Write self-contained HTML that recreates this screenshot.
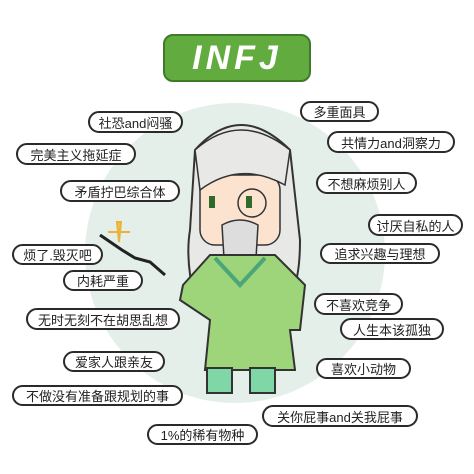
<!DOCTYPE html>
<html><head><meta charset="utf-8"><style>
body{margin:0;width:474px;height:474px;background:#fff;position:relative;overflow:hidden;font-family:"Liberation Sans","Noto Sans CJK SC",sans-serif}
.p{position:absolute;border:2px solid #2a2a2a;border-radius:12px;background:#fff;box-sizing:border-box;font-size:13px;color:#222;display:flex;align-items:center;justify-content:center;white-space:nowrap;letter-spacing:0}
.t{position:absolute;left:163px;top:34px;width:148px;height:48px;background:#62ab3e;border:2px solid #3e7a2a;border-radius:10px;box-sizing:border-box;color:#fff;font:italic bold 34px "Liberation Sans",sans-serif;display:flex;align-items:center;justify-content:center;letter-spacing:4px}
</style></head><body>
<div style="position:absolute;left:85px;top:103px;width:300px;height:300px;border-radius:50%;background:#e3efe8"></div>
<div class="t">INFJ</div>
<svg style="position:absolute;left:0;top:0" width="474" height="474">
<path d="M100 235 L122 250 L135 258 L150 262 L165 275" stroke="#222" stroke-width="3" fill="none"/>
<path d="M117 222 L119 242 L121 222 Z M108 232 L130 232" stroke="#e9b23c" stroke-width="2" fill="#f4c542"/>
<path d="M195 150 Q240 100 290 150 L300 240 Q300 290 285 300 L195 300 Q185 260 190 230 Z" fill="#e8e8e6" stroke="#333" stroke-width="2"/>
<rect x="200" y="175" width="80" height="70" rx="15" fill="#fbe3d0" stroke="#333" stroke-width="1.5"/>
<path d="M195 150 Q240 110 290 150 L285 185 Q240 160 200 190 Z" fill="#e8e8e6" stroke="#333" stroke-width="1.5"/>
<circle cx="252" cy="203" r="14" fill="none" stroke="#333" stroke-width="1.5"/>
<rect x="209" y="196" width="6" height="12" fill="#2f6a2b"/><rect x="246" y="196" width="6" height="12" fill="#2f6a2b"/>
<path d="M222 225 Q240 215 258 225 L255 275 L225 275 Z" fill="#ddd" stroke="#333" stroke-width="1.5"/>
<path d="M183 285 L210 255 L275 255 L305 285 L300 330 L290 330 L295 370 L205 370 L210 320 L180 300 Z" fill="#9ed47a" stroke="#333" stroke-width="2"/>
<path d="M215 258 L240 285 L265 258" fill="none" stroke="#4aa57a" stroke-width="4"/>
<rect x="207" y="368" width="25" height="25" fill="#7fd6a6" stroke="#333" stroke-width="2"/>
<rect x="250" y="368" width="25" height="25" fill="#7fd6a6" stroke="#333" stroke-width="2"/>
</svg>
<div class="p" style="left:88px;top:111px;width:95px;height:22px">社恐and闷骚</div>
<div class="p" style="left:16px;top:143px;width:120px;height:22px">完美主义拖延症</div>
<div class="p" style="left:60px;top:180px;width:120px;height:22px">矛盾拧巴综合体</div>
<div class="p" style="left:300px;top:101px;width:79px;height:21px">多重面具</div>
<div class="p" style="left:327px;top:131px;width:128px;height:22px">共情力and洞察力</div>
<div class="p" style="left:316px;top:172px;width:101px;height:22px">不想麻烦别人</div>
<div class="p" style="left:368px;top:214px;width:95px;height:22px">讨厌自私的人</div>
<div class="p" style="left:12px;top:244px;width:91px;height:21px">烦了.毁灭吧</div>
<div class="p" style="left:63px;top:270px;width:80px;height:21px">内耗严重</div>
<div class="p" style="left:26px;top:308px;width:154px;height:22px">无时无刻不在胡思乱想</div>
<div class="p" style="left:63px;top:351px;width:102px;height:21px">爱家人跟亲友</div>
<div class="p" style="left:12px;top:385px;width:171px;height:21px">不做没有准备跟规划的事</div>
<div class="p" style="left:147px;top:424px;width:111px;height:21px">1%的稀有物种</div>
<div class="p" style="left:320px;top:243px;width:120px;height:21px">追求兴趣与理想</div>
<div class="p" style="left:314px;top:293px;width:89px;height:22px">不喜欢竞争</div>
<div class="p" style="left:340px;top:318px;width:104px;height:22px">人生本该孤独</div>
<div class="p" style="left:316px;top:358px;width:95px;height:21px">喜欢小动物</div>
<div class="p" style="left:262px;top:405px;width:156px;height:22px">关你屁事and关我屁事</div>
</body></html>
